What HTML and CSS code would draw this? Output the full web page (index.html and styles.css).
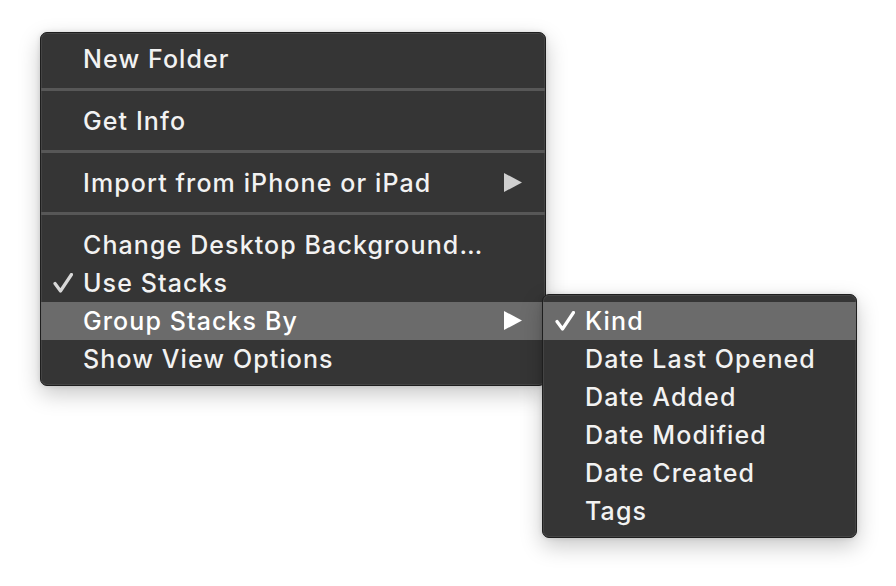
FILE: index.html
```html
<!DOCTYPE html>
<html>
<head>
<meta charset="utf-8">
<link rel="stylesheet" href="styles.css">
</head>
<body>
<div class="stage">
  <div class="menu main">
    <div class="item"><span class="label">New Folder</span></div>
    <div class="sep"></div>
    <div class="item"><span class="label">Get Info</span></div>
    <div class="sep"></div>
    <div class="item"><span class="label">Import from iPhone or iPad</span><svg class="arrow" viewBox="0 0 18 19"><polygon points="0,0 18,9.5 0,19"/></svg></div>
    <div class="sep"></div>
    <div class="item"><span class="label">Change Desktop Background…</span></div>
    <div class="item"><svg class="check" viewBox="0 0 20 20"><path d="M2 10.5 L7.5 18 L18.5 1.5"/></svg><span class="label">Use Stacks</span></div>
    <div class="item active"><span class="label">Group Stacks By</span><svg class="arrow" viewBox="0 0 18 19"><polygon points="0,0 18,9.5 0,19"/></svg></div>
    <div class="item"><span class="label">Show View Options</span></div>

    <div class="menu sub">
      <div class="item active"><svg class="check" viewBox="0 0 20 20"><path d="M2 10.5 L7.5 18 L18.5 1.5"/></svg><span class="label">Kind</span></div>
      <div class="item"><span class="label">Date Last Opened</span></div>
      <div class="item"><span class="label">Date Added</span></div>
      <div class="item"><span class="label">Date Modified</span></div>
      <div class="item"><span class="label">Date Created</span></div>
      <div class="item"><span class="label">Tags</span></div>
    </div>
  </div>
</div>
</body>
</html>
```

FILE: styles.css
```css
html, body {
  margin: 0;
  padding: 0;
  background: #ffffff;
}
body {
  width: 896px;
  height: 586px;
  overflow: hidden;
  font-family: Inter, "Noto Sans", "DejaVu Sans", sans-serif;
}
.stage {
  padding: 32px 0 0 40px;
}
.menu {
  background: #353535;
  border: 1px solid #1e1e1e;
  border-radius: 7px;
  box-shadow: inset 0 0 0 1px rgba(255,255,255,0.08), 0 8px 22px rgba(0,0,0,0.22), 0 0 5px rgba(0,0,0,0.12);
  padding: 7px 0;
  box-sizing: border-box;
}
.main {
  position: relative;
  width: 506px;
  height: 354px;
}
.sub {
  position: absolute;
  left: 501px;
  top: 261px;
  width: 315px;
  height: 244px;
}
.item {
  position: relative;
  height: 38px;
  display: flex;
  align-items: center;
  padding-left: 42px;
  color: #f2f2f2;
  font-size: 25px;
  font-weight: 500;
  letter-spacing: 1.1px;
}
.item.active {
  background: #6b6b6b;
  color: #ffffff;
}
.label {
  line-height: 38px;
}
.sep {
  height: 24px;
  display: flex;
  align-items: center;
}
.sep::before {
  content: "";
  display: block;
  width: 100%;
  height: 3px;
  margin-top: -1px;
  background: #575757;
}
.arrow {
  position: absolute;
  right: 23px;
  top: 9px;
  width: 18px;
  height: 19px;
  fill: #cfcfcf;
}
.active .arrow {
  fill: #ffffff;
}
.check {
  position: absolute;
  left: 12px;
  top: 9px;
  width: 20px;
  height: 20px;
  fill: none;
  stroke: #d8d8d8;
  stroke-width: 3.2;
  stroke-linecap: round;
  stroke-linejoin: round;
}
.active .check {
  stroke: #ffffff;
}
```
